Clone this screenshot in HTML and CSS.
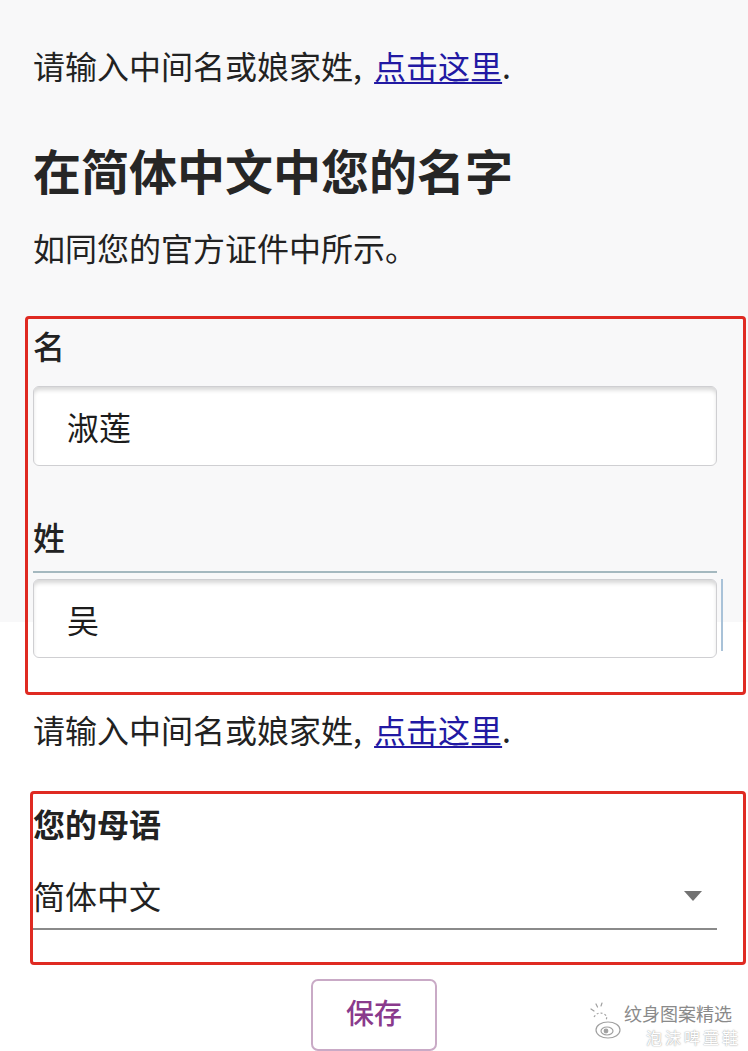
FILE: index.html
```html
<!DOCTYPE html>
<html lang="zh-CN">
<head>
<meta charset="utf-8">
<title>在简体中文中您的名字</title>
<link rel="stylesheet" href="styles.css">
</head>
<body>
<div class="page">
  <p class="hint first">请输入中间名或娘家姓, <a href="#" class="link">点击这里</a>.</p>
  <h1 class="title">在简体中文中您的名字</h1>
  <p class="sub">如同您的官方证件中所示。</p>

  <div class="mark mark-names">
    <label class="field-label">名</label>
    <input class="text-input" type="text" value="淑莲">
    <label class="field-label second">姓</label>
    <div class="focus-wrap">
      <input class="text-input" type="text" value="吴">
    </div>
  </div>

  <p class="hint again">请输入中间名或娘家姓, <a href="#" class="link">点击这里</a>.</p>

  <div class="mark mark-lang">
    <div class="lang-label">您的母语</div>
    <div class="select">
      <span class="select-value">简体中文</span>
      <span class="caret"></span>
    </div>
  </div>

  <div class="actions">
    <button class="save" type="button">保存</button>
  </div>
</div>

<div class="watermark">
  <svg class="wb-icon" width="34" height="40" viewBox="0 0 34 40" fill="none" stroke="#a0a0a0" stroke-width="1.2">
    <path d="M3 9 l3 2 M8 4 l1.5 3 M14 3 l-1 3" stroke-linecap="round"/>
    <path d="M6 17 q4 -6 10 -3 q4 2 2 6" stroke-dasharray="2 2"/>
    <ellipse cx="20" cy="30" rx="12" ry="8"/>
    <ellipse cx="19" cy="31" rx="6" ry="4"/>
    <circle cx="18" cy="31" r="1.8" fill="#a0a0a0"/>
  </svg>
  <div class="wm-text">
    <span class="wm-line1">纹身图案精选</span>
    <span class="wm-line2">泡沫啤童鞋</span>
  </div>
</div>
</body>
</html>
```

FILE: styles.css
```css
html, body {
  margin: 0;
  padding: 0;
}

body {
  width: 748px;
  min-height: 1051px;
  background: linear-gradient(to bottom, #f8f8f9 0, #f8f8f9 622px, #ffffff 622px);
  font-family: "Noto Sans CJK SC", "Noto Sans", sans-serif;
  color: #222222;
  position: relative;
  overflow: hidden;
}

.page {
  padding: 43px 31px 0 33px;
}

.hint {
  margin: 0;
  font-size: 32px;
  line-height: 44px;
}

.link {
  color: #2219a3;
  margin-left: 5px;
  text-decoration: underline;
  text-underline-offset: 3px;
  text-decoration-thickness: 2px;
}

.title {
  margin: 52px 0 0;
  font-size: 48px;
  line-height: 60px;
  font-weight: 700;
  color: #262626;
}

.sub {
  margin: 26px 0 0;
  font-size: 32px;
  line-height: 44px;
}

.mark {
  border: 3px solid #df2a22;
  border-radius: 4px;
}

.mark-names {
  margin: 47px -29px 0 -8px;
  padding: 4px 26px 34px 5px;
  display: flex;
  flex-direction: column;
}

.field-label {
  font-size: 32px;
  line-height: 44px;
  font-weight: 500;
}

.field-label.second {
  margin-top: 48px;
}

.text-input {
  display: block;
  box-sizing: border-box;
  width: 100%;
  height: 80px;
  margin: 19px 0 0;
  padding: 0 0 0 33px;
  border: 1px solid #cfcfd2;
  border-radius: 6px;
  background: #ffffff;
  box-shadow: inset 0 4px 4px -1px rgba(0, 0, 0, 0.16);
  font-family: "Noto Sans CJK SC", sans-serif;
  font-size: 32px;
  color: #1c1c1c;
  outline: none;
}

.focus-wrap {
  position: relative;
  margin-top: 13px;
  padding-top: 6px;
  border-top: 2px solid #a4b8bf;
}

.focus-wrap .text-input {
  margin: 0;
  height: 79px;
}

.focus-wrap::after {
  content: "";
  position: absolute;
  right: -6px;
  top: 6px;
  width: 2px;
  height: 72px;
  background: #a9c2d8;
}

.hint.again {
  margin-top: 12px;
}

.mark-lang {
  margin: 40px -29px 0 -3px;
  padding: 7px 26px 32px 0;
}

.lang-label {
  font-size: 32px;
  line-height: 44px;
  font-weight: 700;
}

.select {
  margin-top: 25px;
  height: 58px;
  border-bottom: 2px solid #8a8a8a;
  display: flex;
  align-items: center;
  justify-content: space-between;
}

.select-value {
  font-size: 32px;
  line-height: 44px;
  margin-top: -9px;
}

.caret {
  width: 0;
  height: 0;
  border-left: 9px solid transparent;
  border-right: 9px solid transparent;
  border-top: 10px solid #727272;
  margin: -6px 15px 0 0;
}

.actions {
  display: flex;
  justify-content: center;
  margin: 14px 0 0 -2px;
}

.save {
  width: 126px;
  height: 72px;
  box-sizing: border-box;
  border: 2px solid #c9aac6;
  border-radius: 7px;
  background: #ffffff;
  color: #8a3a8c;
  font-family: "Noto Sans CJK SC", sans-serif;
  font-size: 28px;
  font-weight: 500;
  padding: 0 0 6px;
}

.watermark {
  position: absolute;
  left: 588px;
  top: 1000px;
  display: flex;
  align-items: flex-start;
  gap: 2px;
}

.wm-text {
  display: flex;
  flex-direction: column;
}

.wm-line1 {
  font-size: 18px;
  line-height: 22px;
  color: #8a8a8a;
  margin-top: 2px;
}

.wm-line2 {
  font-size: 16px;
  line-height: 22px;
  color: #ffffff;
  text-shadow: 0 0 1px #a8a8a8, 0 0 2px #bdbdbd;
  margin: 2px 0 0 22px;
  letter-spacing: 3px;
}
```
